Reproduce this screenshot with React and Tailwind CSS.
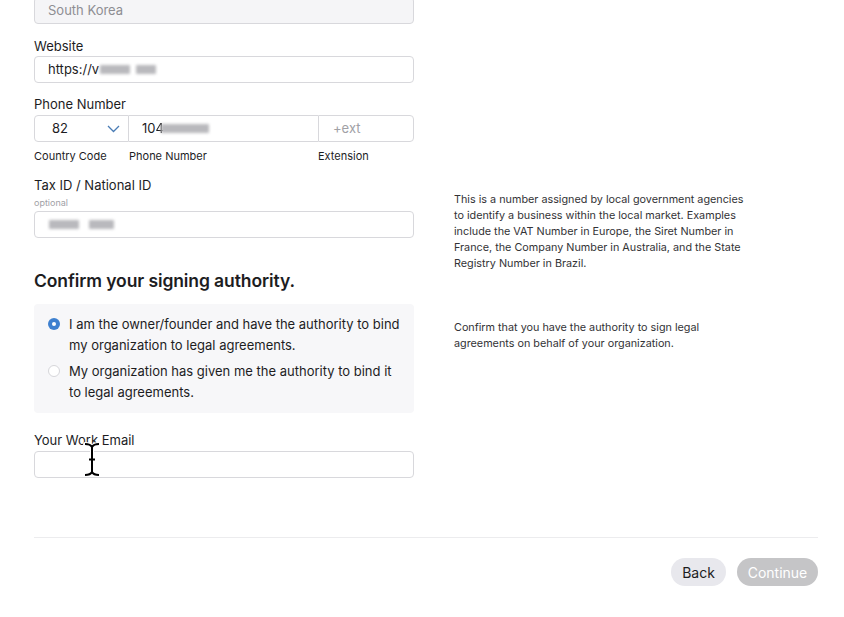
import React from "react";

function Blur({ w, h = 9, className = "" }) {
  return (
    <span
      className={`inline-block align-middle bg-[#b9b9bd] blur-[1.5px] rounded-[1px] ${className}`}
      style={{ width: w, height: h }}
    />
  );
}

function Radio({ checked }) {
  return checked ? (
    <span className="mt-[4px] flex h-[12px] w-[12px] shrink-0 items-center justify-center rounded-full bg-[#3e80cf]">
      <span className="h-[4px] w-[4px] rounded-full bg-white" />
    </span>
  ) : (
    <span className="mt-[4px] h-[12px] w-[12px] shrink-0 rounded-full border border-[#d6d6da] bg-white" />
  );
}

export default function App() {
  return (
    <div
      className="relative h-[617px] w-[844px] overflow-hidden bg-white text-[#1d1d1f]"
      style={{ fontFamily: "Inter, 'Liberation Sans', sans-serif" }}
    >
      <div className="flex flex-col px-[34px]">
        <div className="flex gap-[40px]">
          {/* Left column */}
          <div className="flex w-[380px] shrink-0 flex-col">
            <div className="mt-[-3px] flex h-[27px] items-center rounded-[4px] border border-[#d8d8dc] bg-[#f5f5f7] px-[13px] text-[13px] text-[#8e8e93]">
              South Korea
            </div>

            <div className="mt-[13px] text-[13px] leading-[18px]">Website</div>
            <div className="mt-[1px] flex h-[27px] items-center rounded-[4px] border border-[#d8d8dc] px-[13px] text-[13px]">
              https://v
              <Blur w={30} className="ml-[1px]" />
              <Blur w={20} className="ml-[6px]" />
            </div>

            <div className="mt-[12px] text-[13px] leading-[18px]">Phone Number</div>
            <div className="mt-[2px] flex h-[27px] text-[13px]">
              <div className="flex w-[95px] items-center justify-between rounded-l-[4px] border border-[#d8d8dc] pl-[17px] pr-[8px]">
                <span>82</span>
                <svg width="13" height="8" viewBox="0 0 13 8" fill="none">
                  <path d="M1 1l5.5 5.5L12 1" stroke="#4a7cb5" strokeWidth="1.3" />
                </svg>
              </div>
              <div className="flex w-[189px] items-center border-y border-[#d8d8dc] pl-[13px]">
                10
                <span className="blur-[0.6px]">4</span>
                <Blur w={48} className="ml-[-3px]" />
              </div>
              <div className="flex w-[96px] items-center rounded-r-[4px] border border-[#d8d8dc] pl-[14px] text-[#a1a1a6]">
                +ext
              </div>
            </div>
            <div className="mt-[7px] flex text-[11px] leading-[14px]">
              <span className="w-[95px]">Country Code</span>
              <span className="w-[189px]">Phone Number</span>
              <span>Extension</span>
            </div>

            <div className="mt-[13px] text-[13px] leading-[18px]">Tax ID / National ID</div>
            <div className="mt-[3px] text-[9px] leading-[12px] text-[#a1a1a6]">optional</div>
            <div className="mt-[2px] flex h-[27px] items-center rounded-[4px] border border-[#d8d8dc] pl-[14px]">
              <Blur w={30} />
              <Blur w={25} className="ml-[10px]" />
            </div>

            <div className="mt-[31px] text-[17.5px] font-semibold leading-[24px] tracking-[-0.1px]">
              Confirm your signing authority.
            </div>
            <div className="mt-[11px] flex flex-col gap-[5px] rounded-[4px] bg-[#f7f7f9] px-[14px] py-[10px] text-[13px] leading-[21px]">
              <div className="flex gap-[9px]">
                <Radio checked />
                <span>I am the owner/founder and have the authority to bind my organization to legal agreements.</span>
              </div>
              <div className="flex gap-[9px]">
                <Radio />
                <span>My organization has given me the authority to bind it to legal agreements.</span>
              </div>
            </div>

            <div className="mt-[18px] text-[13px] leading-[18px]">Your Work Email</div>
            <div className="mt-[2px] h-[27px] rounded-[4px] border border-[#d8d8dc]" />
          </div>

          {/* Right column */}
          <div className="flex w-[295px] flex-col text-[10.8px] leading-[16px] text-[#333336]">
            <p className="mt-[192px]">
              This is a number assigned by local government agencies to identify a business within the local market. Examples include the VAT Number in Europe, the Siret Number in France, the Company Number in Australia, and the State Registry Number in Brazil.
            </p>
            <p className="mt-[48px]">
              Confirm that you have the authority to sign legal agreements on behalf of your organization.
            </p>
          </div>
        </div>

        <div className="mt-[59px] h-[1px] w-[784px] bg-[#ececee]" />

        <div className="mt-[20px] flex w-[784px] justify-end gap-[11px] text-[14px]">
          <button className="h-[28px] w-[55px] rounded-full bg-[#e8e8ed] text-[#1d1d1f]">Back</button>
          <button className="h-[28px] w-[81px] rounded-full bg-[#c5c5c7] text-white">Continue</button>
        </div>
      </div>

      <svg className="absolute left-[83px] top-[442px]" width="18" height="35" viewBox="0 0 18 35" fill="none">
        <path d="M2 2c3.5 0 6 1 7 3M16 2c-3.5 0-6 1-7 3M9 5v25M2 33c3.5 0 6-1 7-3M16 33c-3.5 0-6-1-7-3M6 17.5h6" stroke="white" strokeWidth="4" strokeLinecap="round" />
        <path d="M2 2c3.5 0 6 1 7 3M16 2c-3.5 0-6 1-7 3M9 5v25M2 33c3.5 0 6-1 7-3M16 33c-3.5 0-6-1-7-3M6 17.5h6" stroke="black" strokeWidth="2" />
      </svg>
    </div>
  );
}
